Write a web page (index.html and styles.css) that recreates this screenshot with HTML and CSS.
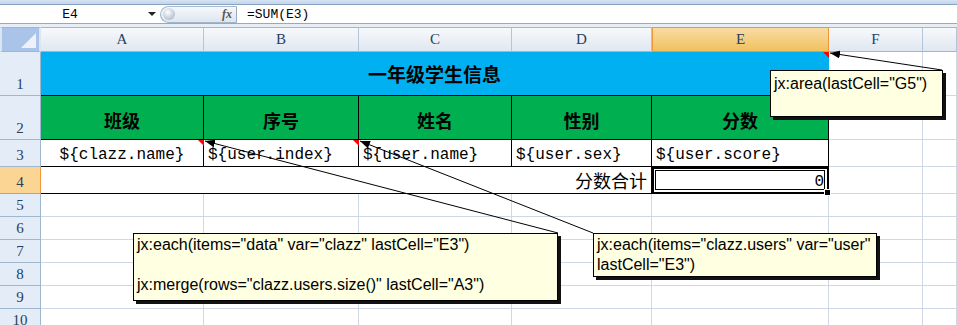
FILE: index.html
```html
<!DOCTYPE html>
<html lang="zh-CN">
<head>
  <meta charset="UTF-8">
  <title>jx 模板 - 一年级学生信息</title>
  <link rel="stylesheet" href="styles.css">
</head>
<body>
  <!-- 编辑栏: 名称框 + fx + 公式 -->
  <div class="top-strip"></div>
  <div class="formula-bar">
    <div class="name-box"><span class="name">E4</span><span class="drop"></span></div>
    <div class="fx-pill"><span class="knob"></span><span class="fx">fx</span></div>
    <div class="formula">=SUM(E3)</div>
  </div>
  <div class="bar-gap"></div>

  <!-- 工作表 -->
  <div class="sheet">
    <div class="corner"><span class="corner-tri"></span></div>
    <div class="col-head">A</div>
    <div class="col-head">B</div>
    <div class="col-head">C</div>
    <div class="col-head">D</div>
    <div class="col-head active">E</div>
    <div class="col-head">F</div>
    <div class="col-head"></div>

    <div class="row-head">1</div>
    <div class="cell title">一年级学生信息</div>
    <div class="cell"></div><div class="cell"></div>

    <div class="row-head">2</div>
    <div class="cell th">班级</div>
    <div class="cell th">序号</div>
    <div class="cell th">姓名</div>
    <div class="cell th">性别</div>
    <div class="cell th">分数</div>
    <div class="cell"></div><div class="cell"></div>

    <div class="row-head">3</div>
    <div class="cell td center">${clazz.name}</div>
    <div class="cell td">${user.index}</div>
    <div class="cell td">${user.name}</div>
    <div class="cell td">${user.sex}</div>
    <div class="cell td">${user.score}</div>
    <div class="cell"></div><div class="cell"></div>

    <div class="row-head active">4</div>
    <div class="cell total-label">分数合计</div>
    <div class="cell total selected">0</div>
    <div class="cell"></div><div class="cell"></div>

    <div class="row-head">5</div>
    <div class="cell"></div><div class="cell"></div><div class="cell"></div><div class="cell"></div><div class="cell"></div><div class="cell"></div><div class="cell"></div>
    <div class="row-head">6</div>
    <div class="cell"></div><div class="cell"></div><div class="cell"></div><div class="cell"></div><div class="cell"></div><div class="cell"></div><div class="cell"></div>
    <div class="row-head">7</div>
    <div class="cell"></div><div class="cell"></div><div class="cell"></div><div class="cell"></div><div class="cell"></div><div class="cell"></div><div class="cell"></div>
    <div class="row-head">8</div>
    <div class="cell"></div><div class="cell"></div><div class="cell"></div><div class="cell"></div><div class="cell"></div><div class="cell"></div><div class="cell"></div>
    <div class="row-head">9</div>
    <div class="cell"></div><div class="cell"></div><div class="cell"></div><div class="cell"></div><div class="cell"></div><div class="cell"></div><div class="cell"></div>
    <div class="row-head">10</div>
    <div class="cell"></div><div class="cell"></div><div class="cell"></div><div class="cell"></div><div class="cell"></div><div class="cell"></div><div class="cell"></div>
  </div>

  <!-- 批注连线和红色标记 -->
  <svg class="links" width="957" height="325" viewBox="0 0 957 325">
    <defs>
      <marker id="head" markerWidth="10" markerHeight="8" refX="10" refY="4" orient="auto-start-reverse" markerUnits="userSpaceOnUse">
        <path d="M0,0 L10,4 L0,8 z" fill="#000"/>
      </marker>
    </defs>
    <polygon points="823,52 829,52 829,58" fill="#ff0000"/>
    <polygon points="198,140 204,140 204,146" fill="#ff0000"/>
    <polygon points="353,140 359,140 359,146" fill="#ff0000"/>
    <line x1="830" y1="53" x2="942" y2="70" stroke="#000" stroke-width="1" marker-start="url(#head)"/>
    <line x1="205" y1="141" x2="558" y2="233" stroke="#000" stroke-width="1" marker-start="url(#head)"/>
    <line x1="360" y1="141" x2="593" y2="233" stroke="#000" stroke-width="1" marker-start="url(#head)"/>
  </svg>

  <!-- 批注 -->
  <div class="note note-area">jx:area(lastCell="G5")</div>
  <div class="note note-each">jx:each(items="data" var="clazz" lastCell="E3")<br><br>jx:merge(rows="clazz.users.size()" lastCell="A3")</div>
  <div class="note note-user">jx:each(items="clazz.users" var="user"<br>lastCell="E3")</div>
</body>
</html>
```

FILE: styles.css
```css
* {
  box-sizing: border-box;
}
body {
  margin: 0;
  width: 957px;
  height: 325px;
  overflow: hidden;
  position: relative;
  background: #fff;
  font-family: "Liberation Serif", serif;
}

/* 编辑栏 */
.top-strip {
  height: 5px;
  background: linear-gradient(#d6e3f3, #c2d4ea);
  border-bottom: 1px solid #8aa2c1;
}
.formula-bar {
  display: flex;
  align-items: center;
  height: 19px;
  background: #fff;
  border-bottom: 1px solid #96a9c2;
}
.name-box {
  width: 160px;
  display: flex;
  align-items: center;
}
.name {
  width: 140px;
  text-align: center;
  font-family: "Liberation Mono", monospace;
  font-size: 13px;
  color: #000;
}
.drop {
  width: 0;
  height: 0;
  margin-left: 8px;
  border-left: 4px solid transparent;
  border-right: 4px solid transparent;
  border-top: 4px solid #222;
}
.fx-pill {
  width: 77px;
  height: 17px;
  display: flex;
  align-items: center;
  justify-content: space-between;
  padding: 0 4px 0 2px;
  border: 1px solid #a3b6cc;
  border-right: 1px solid #9aaabd;
  border-radius: 9px 0 0 9px;
  background: linear-gradient(#f6f8fb, #dde5ef);
}
.knob {
  width: 12px;
  height: 12px;
  border-radius: 50%;
  background: radial-gradient(circle at 40% 35%, #ffffff, #b9c4d2 70%, #94a3b7);
}
.fx {
  font-family: "Liberation Serif", serif;
  font-style: italic;
  font-weight: bold;
  font-size: 12px;
  color: #555;
}
.formula {
  padding-left: 10px;
  font-family: "Liberation Mono", monospace;
  font-size: 13px;
  color: #000;
}
.bar-gap {
  height: 3px;
  background: #e8eef6;
}

/* 工作表网格 */
.sheet {
  display: grid;
  grid-template-columns: 41px 163px 155px 153px 140px 177px 94px 1fr;
  grid-template-rows: 25px 44px 44px 27px 27px repeat(6, 23px);
}
.corner {
  position: relative;
  background: #a9c4e8;
  border: 2px solid #dbe6f4;
  border-top: 1px solid #9eb6ce;
  border-bottom: 1px solid #9eb6ce;
}
.corner-tri {
  position: absolute;
  right: 3px;
  bottom: 3px;
  width: 0;
  height: 0;
  border-left: 15px solid transparent;
  border-bottom: 15px solid #eef2f8;
}
.col-head {
  display: flex;
  align-items: center;
  justify-content: center;
  background: linear-gradient(#f7f9fc, #e0e7f0);
  border-top: 1px solid #9eb6ce;
  border-right: 1px solid #b4c5d9;
  border-bottom: 1px solid #9eb6ce;
  font-size: 15px;
  color: #27415f;
}
.col-head.active {
  background: linear-gradient(#f9dba2, #f1c15f);
  border: 1px solid #f29536;
}
.row-head {
  display: flex;
  align-items: flex-end;
  justify-content: center;
  padding-bottom: 2px;
  background: #e4ecf7;
  border-right: 1px solid #9eb6ce;
  border-bottom: 1px solid #9eb6ce;
  font-size: 15px;
  color: #27415f;
}
.row-head.active {
  background: #fad593;
  border-right: 1px solid #f29536;
  border-bottom: 1px solid #f29536;
}
.cell {
  border-right: 1px solid #d0d7e5;
  border-bottom: 1px solid #d0d7e5;
}

/* 模板内容 */
.title {
  grid-column: span 5;
  display: flex;
  align-items: center;
  justify-content: center;
  background: #00b0f0;
  border-right-color: #00b0f0;
  border-bottom: 1px solid #000;
  font-family: "Noto Sans CJK SC", sans-serif;
  font-weight: bold;
  font-size: 19px;
  color: #000;
}
.th {
  display: flex;
  align-items: center;
  justify-content: center;
  padding-top: 4px;
  background: #00b050;
  border-right: 1px solid #000;
  border-bottom: 1px solid #000;
  font-family: "Noto Sans CJK SC", sans-serif;
  font-weight: bold;
  font-size: 18px;
  color: #000;
}
.td {
  display: flex;
  align-items: flex-end;
  padding: 0 0 2px 4px;
  border-right: 1px solid #000;
  border-bottom: 1px solid #000;
  font-family: "Liberation Mono", monospace;
  font-size: 16px;
  white-space: nowrap;
  color: #000;
}
.td.center {
  justify-content: center;
  padding-left: 0;
}
.total-label {
  grid-column: span 4;
  display: flex;
  align-items: flex-end;
  justify-content: flex-end;
  padding: 0 4px 0 0;
  border-right: 1px solid #000;
  border-bottom: 1px solid #000;
  font-family: "Noto Sans CJK SC", sans-serif;
  font-size: 18px;
  line-height: 25px;
  color: #000;
}
.total {
  display: flex;
  align-items: flex-end;
  justify-content: flex-end;
  padding: 0 4px 2px 0;
  border-right: 1px solid #000;
  border-bottom: 1px solid #000;
  font-family: "Liberation Mono", monospace;
  font-size: 16px;
  color: #000;
}
.selected {
  position: relative;
  outline: 2px solid #000;
  outline-offset: -2px;
  box-shadow: inset 0 0 0 3px #fff, inset 0 0 0 4px #000;
}
.selected::after {
  content: "";
  position: absolute;
  right: -3px;
  bottom: -3px;
  width: 5px;
  height: 5px;
  background: #000;
  border: 1px solid #fff;
}

/* 批注 */
.links {
  position: absolute;
  left: 0;
  top: 0;
  pointer-events: none;
}
.note {
  position: absolute;
  padding: 1px 3px;
  background: #ffffe1;
  border: 1px solid #000;
  box-shadow: 3px 3px 0 #111;
  font-family: "Liberation Sans", sans-serif;
  font-size: 16px;
  line-height: 20px;
  color: #000;
  white-space: nowrap;
}
.note-area {
  left: 770px;
  top: 70px;
  width: 173px;
  height: 47px;
  padding-top: 3px;
}
.note-each {
  left: 133px;
  top: 233px;
  width: 425px;
  height: 68px;
}
.note-user {
  left: 593px;
  top: 233px;
  width: 284px;
  height: 44px;
}
```
